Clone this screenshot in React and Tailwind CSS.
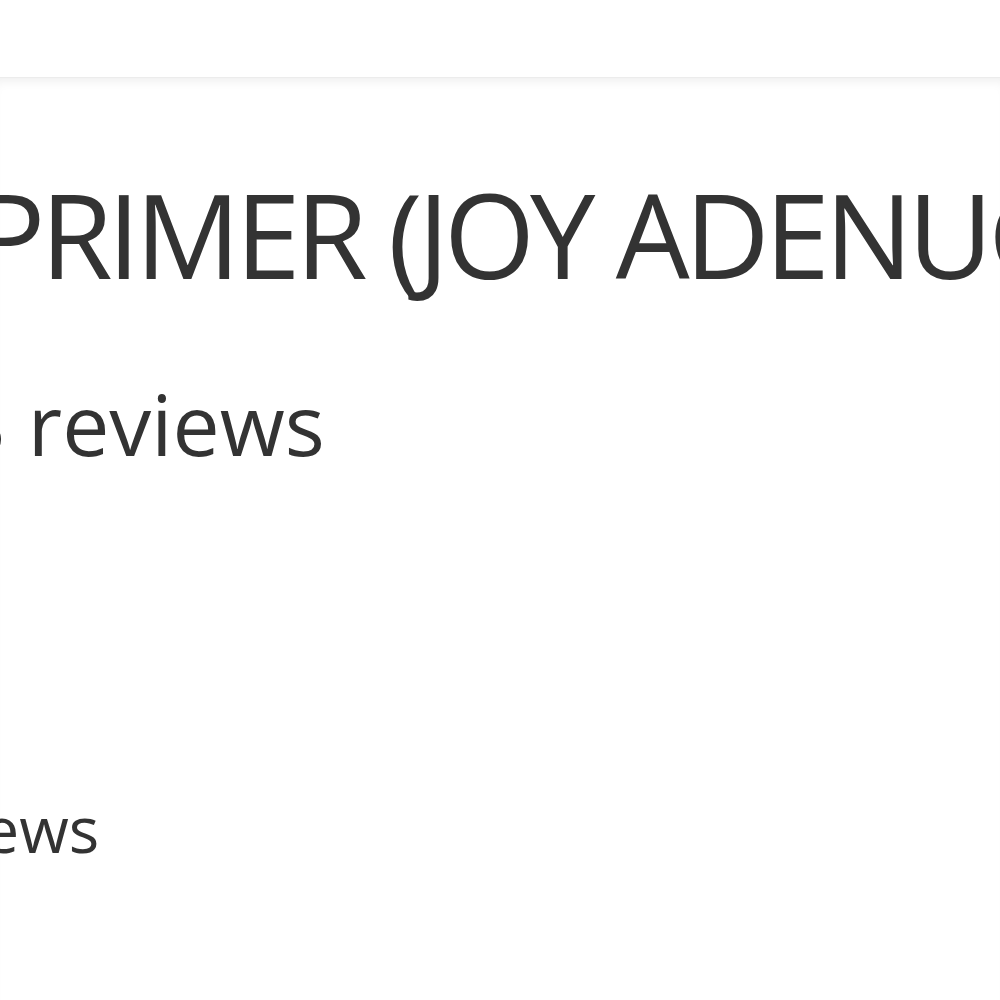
export default function App() {
  return (
    <div className="w-[1000px] h-[1000px] overflow-hidden bg-white text-[#333333]" style={{ fontFamily: '"Open Sans", "Noto Sans", sans-serif' }}>
      <header className="h-[77px] bg-white relative z-10" />
      <main className="relative bg-white shadow-[inset_0_10px_12px_-8px_rgba(0,0,0,0.08)] border-t border-[#ececec] h-[923px]">
        <h1 className="whitespace-nowrap ml-[-25px] mt-[97px] text-[117px] leading-none font-normal tracking-[-5px]">
          PRIMER (JOY ADENUGA)
        </h1>
        <div className="whitespace-nowrap ml-[-42px] mt-[90px] text-[84px] leading-none">
          3 reviews
        </div>
        <div className="whitespace-nowrap ml-[-127px] mt-[331px] text-[64px] leading-none">
          reviews
        </div>
      </main>
    </div>
  );
}
